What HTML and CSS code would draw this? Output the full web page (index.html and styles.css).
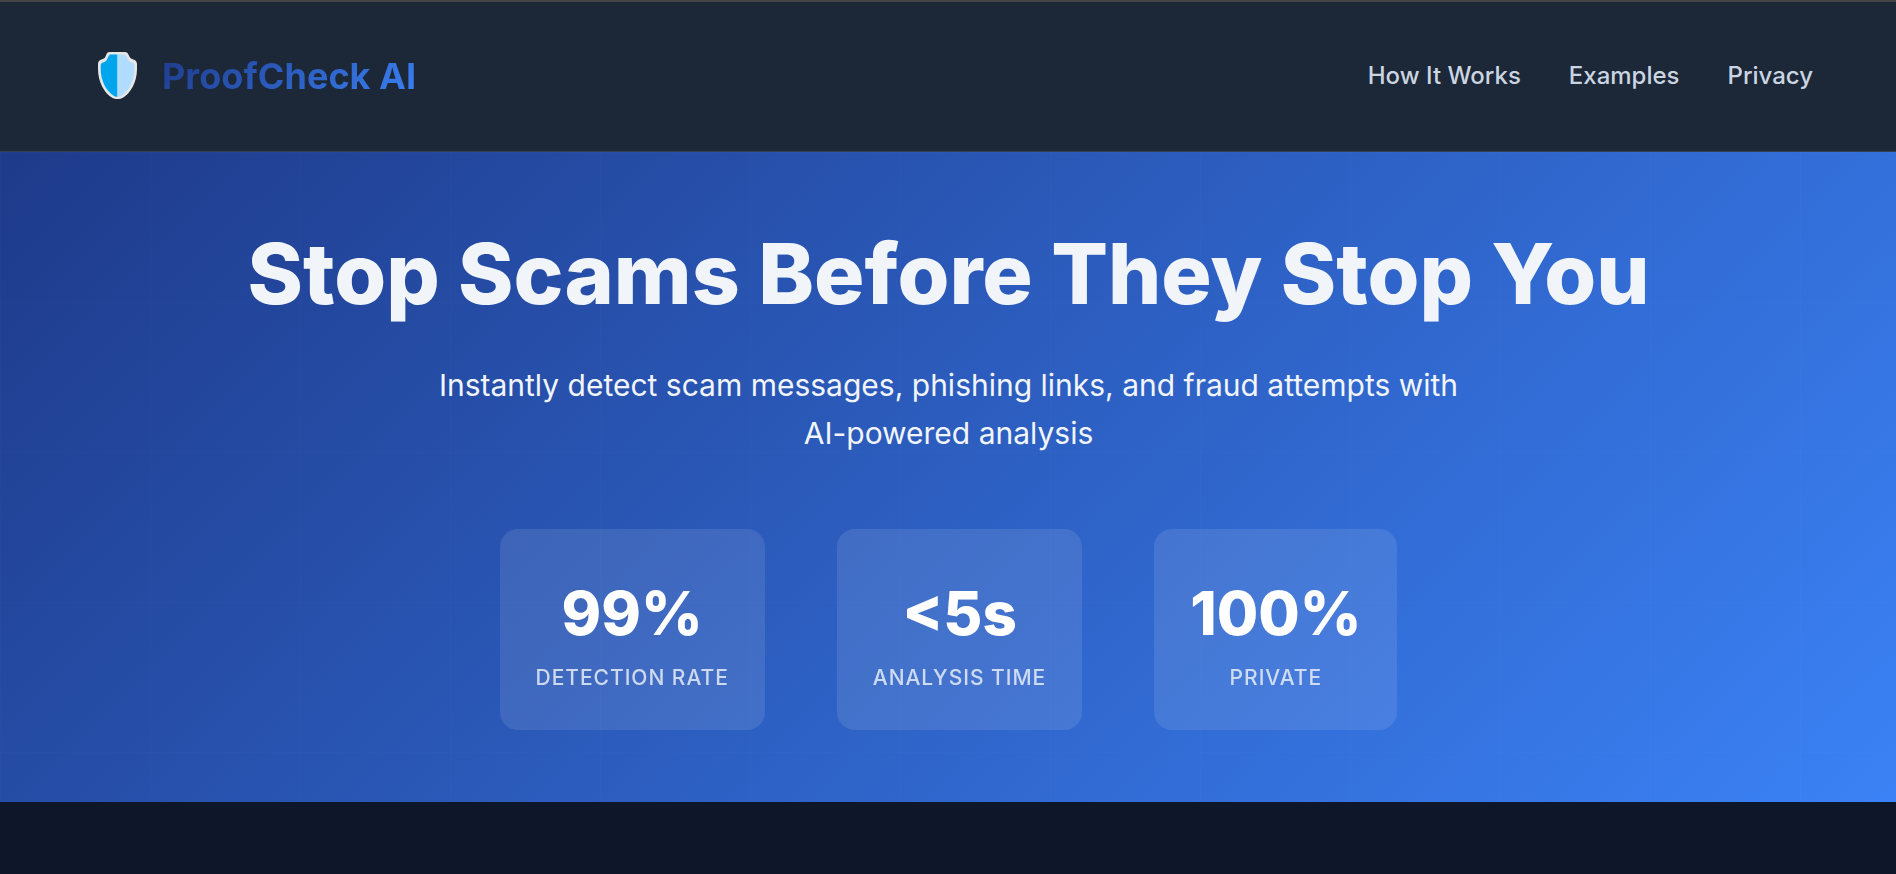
FILE: index.html
```html
<!DOCTYPE html>
<html lang="en">
<head>
    <meta charset="UTF-8">
    <meta name="viewport" content="width=device-width, initial-scale=1.0">
    <title>ProofCheck AI</title>
    <link rel="stylesheet" href="styles.css">
</head>
<body>

<header class="header">
    <div class="header-content">
        <div class="logo">
            <svg class="logo-icon" viewBox="0 0 39 47" aria-hidden="true">
                <path d="M11.5 0h15.5c3 0 3.500 3 5 5.500c1.500 2.200 7 1.500 7 6.500v5c0 13-6.500 24.500-14.500 29c-3.500 1.400-6.500 1.400-10 0C6.500 41.500 0 30 0 17v-5c0-5 5.500-4.300 7-6.500C8.500 3 8.500 0 11.500 0z" fill="#e6e6e6"/>
                <path d="M12 2.600h7.500v42.400c-1.500 0-3-.7-4.500-1.700C8 38.500 2.700 28.500 2.700 17v-3.500c0-3.500 4-2.500 6-5.500c1.300-2 1.800-4.400 3.300-5.400z" fill="#00a6ed"/>
                <path d="M19.500 2.600h7.500c1.500 1 2 3.400 3.300 5.400c2 3 6 2 6 5.500V17c0 11.500-5.300 21.500-12.300 26.300c-1.500 1-3 1.700-4.500 1.700z" fill="#b0ddff"/>
            </svg>
            <span class="logo-text">ProofCheck AI</span>
        </div>
        <nav class="nav">
            <a href="#how-it-works">How It Works</a>
            <a href="#examples">Examples</a>
            <a href="#privacy">Privacy</a>
        </nav>
    </div>
</header>

<section class="hero">
    <div class="hero-content">
        <h1>Stop Scams Before They Stop You</h1>
        <p class="hero-subtitle">Instantly detect scam messages, phishing links, and fraud attempts with AI-powered analysis</p>
        <div class="stats">
            <div class="stat">
                <div class="stat-number">99%</div>
                <div class="stat-label">Detection Rate</div>
            </div>
            <div class="stat">
                <div class="stat-number">&lt;5s</div>
                <div class="stat-label">Analysis Time</div>
            </div>
            <div class="stat">
                <div class="stat-number">100%</div>
                <div class="stat-label">Private</div>
            </div>
        </div>
    </div>
</section>

</body>
</html>
```

FILE: styles.css
```css
* { margin: 0; padding: 0; box-sizing: border-box; }
body {
    font-family: Inter, "Liberation Sans", sans-serif;
    font-size: 24px;
    line-height: 1.6;
    color: #f1f5f9;
    background-color: #0e1729;
    overflow: hidden;
}

/* Header */
.header {
    height: 152px;
    background-color: #1c2837;
    border-top: 2px solid #454545;
    border-bottom: 1px solid #334155;
}
.header-content {
    max-width: 1800px;
    height: 100%;
    margin: 0 auto;
    padding: 0 35px 2px 36px;
    display: flex;
    justify-content: space-between;
    align-items: center;
}
.logo { display: flex; align-items: center; gap: 25px; padding-left: 14px; }
.logo-icon { width: 39px; height: 47px; }
.logo-text {
    padding-top: 2px;
    font-size: 36px;
    font-weight: 700;
    letter-spacing: 0.04px;
    background: linear-gradient(135deg, #1e3a8a 0%, #3b82f6 100%);
    -webkit-background-clip: text;
    background-clip: text;
    color: transparent;
}
.nav { display: flex; gap: 48px; padding-top: 2px; }
.nav a { color: #cbd5e1; font-weight: 500; text-decoration: none; }

/* Hero */
.hero {
    height: 650px;
    padding: 72px 35px 72px 36px;
    text-align: center;
    /* faint grid over the blue gradient */
    background:
        repeating-linear-gradient(90deg, rgba(255,255,255,0.015) 0 1px, transparent 1px 150px),
        repeating-linear-gradient(180deg, rgba(255,255,255,0.01) 0 1px, transparent 1px 150px),
        linear-gradient(135deg, #1e3a8a 0%, #3b82f6 100%);
}
.hero-content { max-width: 1500px; margin: 0 auto; }
.hero h1 {
    font-size: 84px;
    font-weight: 800;
    line-height: 1.2;
    margin-bottom: 36px;
}
.hero-subtitle {
    max-width: 1050px;
    margin: 0 auto 72px;
    font-size: 30px;
}
.stats { display: flex; justify-content: center; gap: 72px; }
.stat {
    padding: 36px;
    border-radius: 18px;
    background-color: rgba(255,255,255,0.1);
}
.stat-number { font-size: 60px; font-weight: 800; color: #fff; }
.stat-label {
    font-size: 21px;
    font-weight: 500;
    letter-spacing: 0.97px;
    text-transform: uppercase;
    opacity: 0.8;
}
```
